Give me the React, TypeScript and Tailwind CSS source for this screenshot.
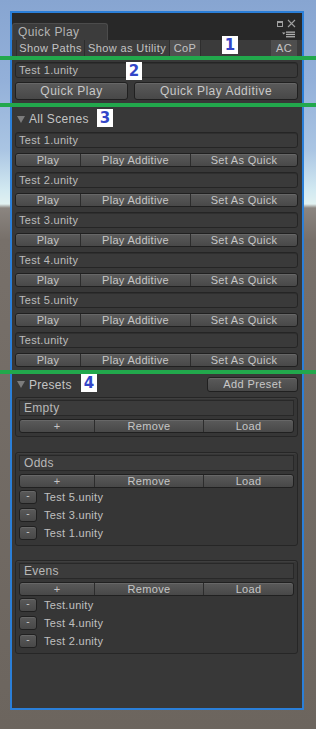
import React from "react";

const F = "font-['Liberation_Sans',Arial,sans-serif]";

function Tri() {
  return (
    <svg width="8" height="7" viewBox="0 0 8 7" className="shrink-0">
      <path d="M0 0 L8 0 L4 7 Z" fill="#7c7c7c" />
    </svg>
  );
}

function Field({ text, className = "" }: { text: string; className?: string }) {
  return (
    <div
      className={`h-[16px] rounded-[3px] border border-[#252525] bg-[#3a3a3a] shadow-[inset_0_1px_0_#2f2f2f] flex items-center pl-[3px] text-[11px] tracking-[0.3px] text-[#bcbcbc] ${className}`}
    >
      {text}
    </div>
  );
}

function Seg({ items }: { items: { label: string; w: string }[] }) {
  return (
    <div className="h-[14px] flex rounded-[3px] border border-[#202020] overflow-hidden bg-[linear-gradient(#5a5a5a,#484848)] shadow-[inset_0_1px_0_#676767]">
      {items.map((it, i) => (
        <div
          key={i}
          className={`${it.w} flex items-center justify-center text-[11px] tracking-[0.3px] text-[#c6c6c6] ${i > 0 ? "border-l border-[#2c2c2c]" : ""}`}
        >
          {it.label}
        </div>
      ))}
    </div>
  );
}

function SceneRow({ name }: { name: string }) {
  return (
    <div className="flex flex-col gap-[5px]">
      <Field text={name} />
      <Seg
        items={[
          { label: "Play", w: "w-[64px]" },
          { label: "Play Additive", w: "w-[110px]" },
          { label: "Set As Quick", w: "flex-1" },
        ]}
      />
    </div>
  );
}

function Preset({ name, items }: { name: string; items: string[] }) {
  return (
    <div className="rounded-[3px] border border-[#262626] bg-[#363636] shadow-[inset_0_1px_0_#3f3f3f] px-[3px] pt-[2px] pb-[3px] flex flex-col">
      <div className="h-[16px] border border-[#282828] bg-[#3b3b3b] flex items-center pl-[4px] text-[12px] tracking-[0.3px] text-[#b8b8b8]">
        {name}
      </div>
      <div className="mt-[3px]">
        <Seg
          items={[
            { label: "+", w: "w-[74px]" },
            { label: "Remove", w: "w-[109px]" },
            { label: "Load", w: "flex-1" },
          ]}
        />
      </div>
      {items.length > 0 && (
        <div className="flex flex-col gap-[4px] mt-[2px] pb-[2px]">
          {items.map((t) => (
            <div key={t} className="flex items-center h-[14px]">
              <div className="w-[18px] h-[14px] rounded-[3px] border border-[#202020] bg-[linear-gradient(#5a5a5a,#484848)] shadow-[inset_0_1px_0_#676767] flex items-center justify-center text-[10px] text-[#c8c8c8] leading-none pb-[2px]">
                -
              </div>
              <div className="ml-[7px] text-[11px] tracking-[0.3px] text-[#c0c0c0]">{t}</div>
            </div>
          ))}
        </div>
      )}
    </div>
  );
}

function Num({ n, pos }: { n: string; pos: string }) {
  return (
    <div
      className={`absolute ${pos} w-[16px] h-[18px] bg-white flex items-center justify-center font-['DejaVu_Sans',sans-serif] font-bold text-[15px] text-[#3346c8]`}
    >
      {n}
    </div>
  );
}

export default function App() {
  return (
    <div
      className={`relative w-[316px] h-[729px] overflow-hidden ${F} bg-[linear-gradient(180deg,#87a5d1_0px,#93b0d9_80px,#aac5e3_150px,#d2e9f1_190px,#e1f1f1_204px,#8b8580_208px,#77706a_240px,#6c655e_729px)] pt-[11px] pl-[10px]`}
    >
      <div className="w-[294px] h-[699px] border-2 border-[#2b7fd8] bg-[#383838] flex flex-col">
        {/* header */}
        <div className="h-[27px] bg-[#282828] flex items-end relative shrink-0">
          <div className="w-[96px] h-[17px] rounded-t-[3px] bg-[#3c3c3c] border-t border-l border-r border-[#4c4c4c] flex items-center pl-[5px] text-[12px] tracking-[0.4px] text-[#b4b4b4]">
            Quick Play
          </div>
          <svg className="absolute left-[264px] top-[7px]" width="8" height="8" viewBox="0 0 8 8">
            <rect x="1.5" y="1.5" width="5" height="5" fill="none" stroke="#a0a0a0" strokeWidth="1" />
            <rect x="1" y="1" width="6" height="2" fill="#a0a0a0" />
          </svg>
          <svg className="absolute left-[275px] top-[6px]" width="9" height="9" viewBox="0 0 9 9">
            <path d="M1 1 L8 8 M8 1 L1 8" stroke="#a0a0a0" strokeWidth="1.1" />
          </svg>
          <svg className="absolute left-[270px] top-[18px]" width="14" height="7" viewBox="0 0 14 7">
            <path d="M0 1.5 L3.5 1.5 L1.75 3.5 Z" fill="#b0b0b0" />
            <rect x="4" y="0.5" width="9" height="1.3" fill="#b0b0b0" />
            <rect x="4" y="2.8" width="9" height="1.3" fill="#b0b0b0" />
            <rect x="4" y="5.1" width="9" height="1.3" fill="#b0b0b0" />
          </svg>
        </div>
        {/* toolbar */}
        <div className="h-[17px] bg-[#3b3b3b] flex items-stretch shrink-0 pl-[4px] pr-[5px] text-[11px] tracking-[0.4px] text-[#c4c4c4]">
          <div className="w-[68px] border-l border-[#2e2e2e] bg-[#3e3e3e] flex items-center justify-center">Show Paths</div>
          <div className="w-[85px] border-l border-[#2e2e2e] bg-[#3e3e3e] flex items-center justify-center">Show as Utility</div>
          <div className="w-[31px] border-l border-[#2e2e2e] bg-[#515151] flex items-center justify-center">CoP</div>
          <div className="flex-1 border-l border-[#2e2e2e]" />
          <div className="w-[26px] bg-[#4e4e4e] flex items-center justify-center">AC</div>
        </div>
        {/* content */}
        <div className="flex flex-col pl-[3px] pr-[4px] pt-[5px]">
          <Field text="Test 1.unity" />
          <div className="flex gap-[6px] mt-[4px]">
            <div className="w-[113px] h-[18px] rounded-[3px] border border-[#202020] bg-[linear-gradient(#5a5a5a,#484848)] shadow-[inset_0_1px_0_#676767] flex items-center justify-center text-[12px] tracking-[0.5px] text-[#c8c8c8]">
              Quick Play
            </div>
            <div className="flex-1 h-[18px] rounded-[3px] border border-[#202020] bg-[linear-gradient(#5a5a5a,#484848)] shadow-[inset_0_1px_0_#676767] flex items-center justify-center text-[12px] tracking-[0.5px] text-[#c8c8c8]">
              Quick Play Additive
            </div>
          </div>
          <div className="h-[16px] mt-[11px] flex items-center gap-[4px] pl-[2px] text-[12px] tracking-[0.3px] text-[#c4c4c4]">
            <Tri />
            All Scenes
          </div>
          <div className="flex flex-col gap-[5px] mt-[5px]">
            {["Test 1.unity", "Test 2.unity", "Test 3.unity", "Test 4.unity", "Test 5.unity", "Test.unity"].map((s) => (
              <SceneRow key={s} name={s} />
            ))}
          </div>
          <div className="h-[15px] mt-[10px] flex items-center">
            <div className="flex items-center gap-[4px] pl-[2px] text-[12px] tracking-[0.3px] text-[#c4c4c4]">
              <Tri />
              Presets
            </div>
            <div className="ml-auto w-[91px] h-[15px] rounded-[3px] border border-[#202020] bg-[linear-gradient(#5a5a5a,#484848)] shadow-[inset_0_1px_0_#676767] flex items-center justify-center text-[11px] tracking-[0.4px] text-[#c8c8c8]">
              Add Preset
            </div>
          </div>
          <div className="flex flex-col mt-[5px]">
            <Preset name="Empty" items={[]} />
            <div className="h-[15px]" />
            <Preset name="Odds" items={["Test 5.unity", "Test 3.unity", "Test 1.unity"]} />
            <div className="h-[14px]" />
            <Preset name="Evens" items={["Test.unity", "Test 4.unity", "Test 2.unity"]} />
          </div>
        </div>
      </div>

      {/* annotation overlays */}
      <div className="absolute left-0 top-[56px] w-[316px] h-[4px] bg-[#22a84c]" />
      <div className="absolute left-0 top-[103px] w-[316px] h-[4px] bg-[#22a84c]" />
      <div className="absolute left-0 top-[370px] w-[316px] h-[4px] bg-[#22a84c]" />
      <Num n="1" pos="left-[222px] top-[36px]" />
      <Num n="2" pos="left-[126px] top-[62px]" />
      <Num n="3" pos="left-[97px] top-[109px]" />
      <Num n="4" pos="left-[81px] top-[374px]" />
    </div>
  );
}
